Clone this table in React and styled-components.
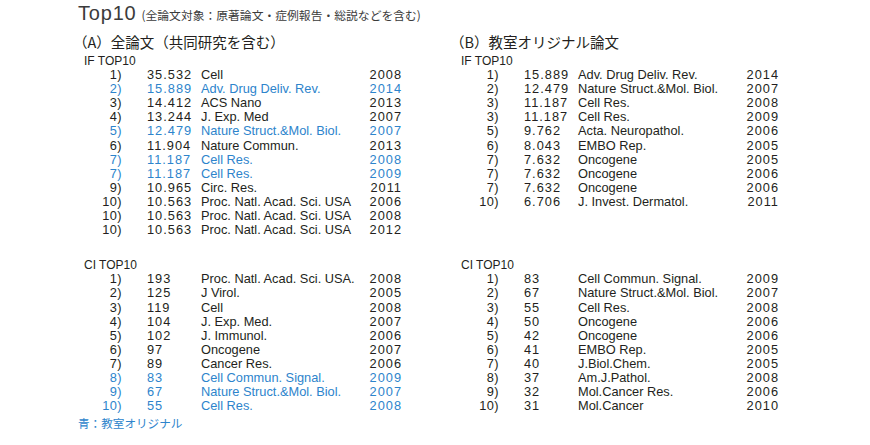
import React from "react";
import styled, { createGlobalStyle } from "styled-components";

const GlobalStyle = createGlobalStyle`
  html, body {
    margin: 0;
    background: #ffffff;
  }
  body {
    font-family: "Liberation Sans", "Noto Sans CJK JP", sans-serif;
    color: #231f20;
  }
`;

const Page = styled.div`
  width: 870px;
  height: 445px;
  box-sizing: border-box;
  padding: 2px 0 0 78px;
  overflow: hidden;
`;

const TitleLine = styled.div`
  display: flex;
  align-items: baseline;
  gap: 5px;
  height: 22px;
  line-height: 22px;
  color: #3b3b3b;
`;

const Title = styled.h1`
  margin: 0;
  font-size: 20px;
  font-weight: 500;
  letter-spacing: 0.8px;
`;

const Subtitle = styled.span`
  font-family: "Noto Sans CJK JP", sans-serif;
  font-size: 11.8px;
`;

const Columns = styled.div`
  display: grid;
  grid-template-columns: 377px 330px;
  row-gap: 21px;
  margin-top: 9px;
`;

const Heading = styled.h2`
  margin: 0 0 3px -5px;
  font-family: "Noto Sans CJK JP", sans-serif;
  font-size: 14.5px;
  font-weight: 400;
  line-height: 18px;
  color: #231f20;
`;

const Block = styled.section`
  display: flex;
  flex-direction: column;
`;

const Label = styled.div`
  padding-left: 6px;
  font-size: 12px;
  line-height: 14.1px;
`;

const Table = styled.div`
  display: grid;
  grid-template-columns: 44px 79px 166px 35px;
  font-size: 12.8px;
  line-height: 14.1px;
`;

const Row = styled.div`
  display: contents;
  color: ${(p) => (p.$blue ? "#2d84cc" : "#231f20")};
`;

const Rank = styled.span`
  text-align: right;
  letter-spacing: 0.4px;
`;

const Value = styled.span`
  padding-left: 25px;
  letter-spacing: 1px;
`;

const Journal = styled.span`
  white-space: nowrap;
`;

const Year = styled.span`
  text-align: right;
  letter-spacing: 1px;
  margin-right: 0;
`;

const Note = styled.div`
  margin-top: 3px;
  font-family: "Noto Sans CJK JP", sans-serif;
  font-size: 11.6px;
  line-height: 14px;
  color: #2d84cc;
`;

const allIF = [
  ["1)", "35.532", "Cell", "2008"],
  ["2)", "15.889", "Adv. Drug Deliv. Rev.", "2014", true],
  ["3)", "14.412", "ACS Nano", "2013"],
  ["4)", "13.244", "J. Exp. Med", "2007"],
  ["5)", "12.479", "Nature Struct.&Mol. Biol.", "2007", true],
  ["6)", "11.904", "Nature Commun.", "2013"],
  ["7)", "11.187", "Cell Res.", "2008", true],
  ["7)", "11.187", "Cell Res.", "2009", true],
  ["9)", "10.965", "Circ. Res.", "2011"],
  ["10)", "10.563", "Proc. Natl. Acad. Sci. USA", "2006"],
  ["10)", "10.563", "Proc. Natl. Acad. Sci. USA", "2008"],
  ["10)", "10.563", "Proc. Natl. Acad. Sci. USA", "2012"],
];

const allCI = [
  ["1)", "193", "Proc. Natl. Acad. Sci. USA.", "2008"],
  ["2)", "125", "J Virol.", "2005"],
  ["3)", "119", "Cell", "2008"],
  ["4)", "104", "J. Exp. Med.", "2007"],
  ["5)", "102", "J. Immunol.", "2006"],
  ["6)", "97", "Oncogene", "2007"],
  ["7)", "89", "Cancer Res.", "2006"],
  ["8)", "83", "Cell Commun. Signal.", "2009", true],
  ["9)", "67", "Nature Struct.&Mol. Biol.", "2007", true],
  ["10)", "55", "Cell Res.", "2008", true],
];

const ownIF = [
  ["1)", "15.889", "Adv. Drug Deliv. Rev.", "2014"],
  ["2)", "12.479", "Nature Struct.&Mol. Biol.", "2007"],
  ["3)", "11.187", "Cell Res.", "2008"],
  ["3)", "11.187", "Cell Res.", "2009"],
  ["5)", "9.762", "Acta. Neuropathol.", "2006"],
  ["6)", "8.043", "EMBO Rep.", "2005"],
  ["7)", "7.632", "Oncogene", "2005"],
  ["7)", "7.632", "Oncogene", "2006"],
  ["7)", "7.632", "Oncogene", "2006"],
  ["10)", "6.706", "J. Invest. Dermatol.", "2011"],
];

const ownCI = [
  ["1)", "83", "Cell Commun. Signal.", "2009"],
  ["2)", "67", "Nature Struct.&Mol. Biol.", "2007"],
  ["3)", "55", "Cell Res.", "2008"],
  ["4)", "50", "Oncogene", "2006"],
  ["5)", "42", "Oncogene", "2006"],
  ["6)", "41", "EMBO Rep.", "2005"],
  ["7)", "40", "J.Biol.Chem.", "2005"],
  ["8)", "37", "Am.J.Pathol.", "2008"],
  ["9)", "32", "Mol.Cancer Res.", "2006"],
  ["10)", "31", "Mol.Cancer", "2010"],
];

function RankTable({ label, rows }) {
  return (
    <>
      <Label>{label}</Label>
      <Table>
        {rows.map(([rank, value, journal, year, blue], i) => (
          <Row key={i} $blue={blue}>
            <Rank>{rank}</Rank>
            <Value>{value}</Value>
            <Journal>{journal}</Journal>
            <Year>{year}</Year>
          </Row>
        ))}
      </Table>
    </>
  );
}

export default function App() {
  return (
    <>
      <GlobalStyle />
      <Page>
        <TitleLine>
          <Title>Top10</Title>
          <Subtitle>(全論文対象：原著論文・症例報告・総説などを含む)</Subtitle>
        </TitleLine>
        <Columns>
          <Block>
            <Heading>（A）全論文（共同研究を含む）</Heading>
            <RankTable label="IF TOP10" rows={allIF} />
          </Block>
          <Block>
            <Heading>（B）教室オリジナル論文</Heading>
            <RankTable label="IF TOP10" rows={ownIF} />
          </Block>
          <Block>
            <RankTable label="CI TOP10" rows={allCI} />
            <Note>青：教室オリジナル</Note>
          </Block>
          <Block>
            <RankTable label="CI TOP10" rows={ownCI} />
          </Block>
        </Columns>
      </Page>
    </>
  );
}
